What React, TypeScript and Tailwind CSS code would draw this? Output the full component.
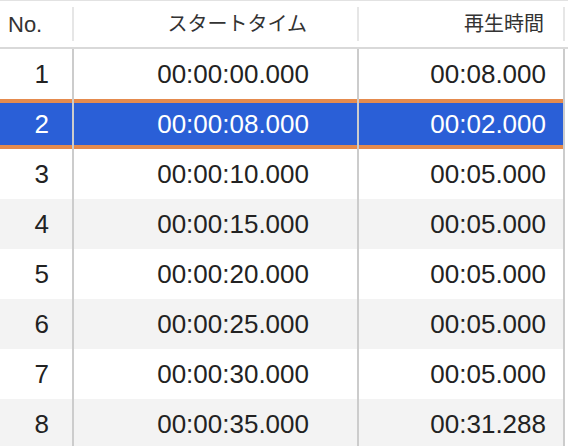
const rows = [
  { no: 1, start: "00:00:00.000", dur: "00:08.000" },
  { no: 2, start: "00:00:08.000", dur: "00:02.000" },
  { no: 3, start: "00:00:10.000", dur: "00:05.000" },
  { no: 4, start: "00:00:15.000", dur: "00:05.000" },
  { no: 5, start: "00:00:20.000", dur: "00:05.000" },
  { no: 6, start: "00:00:25.000", dur: "00:05.000" },
  { no: 7, start: "00:00:30.000", dur: "00:05.000" },
  { no: 8, start: "00:00:35.000", dur: "00:31.288" },
];

const SELECTED = 2;

const Row = (props: { no: number; start: string; dur: string; index: number }) => {
  const { no, start, dur, index } = props;
  const selected = no === SELECTED;
  const bg = selected
    ? "bg-[#2a5fd7] text-white shadow-[inset_0_4px_0_#e58b4e,inset_0_-4px_0_#e58b4e]"
    : index % 2 === 1
      ? "bg-[#f3f3f3] text-[#222]"
      : "bg-white text-[#222]";

  return (
    <div className="flex h-[50px] text-[26px] leading-none">
      <div className={`flex w-[74px] items-center justify-end border-r-2 border-[#cccccc] pr-[23px] ${bg}`}>
        {no}
      </div>
      <div className={`flex w-[285px] items-center justify-end border-r-2 border-[#cccccc] pr-[48px] ${bg}`}>
        {start}
      </div>
      <div className={`flex w-[206px] items-center justify-end border-r-2 border-[#cccccc] pr-[17px] ${bg}`}>
        {dur}
      </div>
      <div className="flex-1 bg-white" />
    </div>
  );
};

const App = () => {
  return (
    <div
      className="h-[446px] w-[568px] overflow-hidden bg-white"
      style={{ fontFamily: '"Liberation Sans", "Noto Sans CJK JP", sans-serif' }}
    >
      <div className="flex h-[49px] border-t border-[#e2e2e2] border-b-2 border-b-[#d9d9d9] text-[20px] text-[#333]">
        <div className="flex w-[74px] items-center py-[6px]">
          <div className="flex h-full flex-1 items-center pl-[8px] text-[22px]">No.</div>
          <div className="h-full w-[2px] bg-[#e6e6e6]" />
        </div>
        <div className="flex w-[285px] items-center py-[6px]">
          <div className="flex h-full flex-1 items-center justify-end pr-[50px]">スタートタイム</div>
          <div className="h-full w-[2px] bg-[#e6e6e6]" />
        </div>
        <div className="flex w-[206px] items-center py-[6px]">
          <div className="flex h-full flex-1 items-center justify-end pr-[19px]">再生時間</div>
          <div className="h-full w-[2px] bg-[#e6e6e6]" />
        </div>
        <div className="flex-1" />
      </div>
      {rows.map((r, i) => (
        <Row key={r.no} {...r} index={i} />
      ))}
    </div>
  );
};

export default App;
